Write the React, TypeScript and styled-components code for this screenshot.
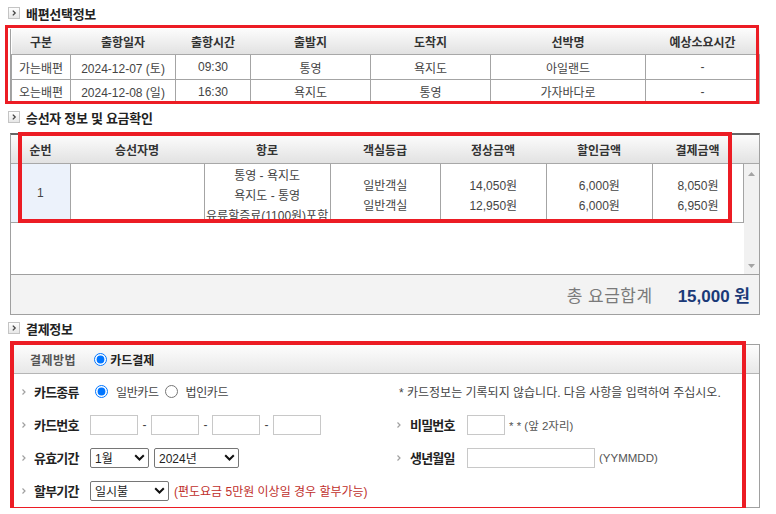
import styled, { createGlobalStyle } from 'styled-components'

const GlobalStyle = createGlobalStyle`
  html, body { margin: 0; padding: 0; background: #fff; }
  body {
    font-family: 'Liberation Sans', 'Noto Sans CJK KR', sans-serif;
    font-size: 12px;
    color: #333;
  }
`

const Page = styled.div`
  width: 750px;
  padding: 0 16px 0 10px;
`

const SectionTitle = styled.h2`
  display: flex;
  align-items: center;
  gap: 6px;
  height: 26px;
  margin: 0 0 3px -2px;
  font-size: 13px;
  font-weight: 700;
  color: #222;
  letter-spacing: -0.3px;
`

const Frame = styled.div`
  position: relative;
`

const Highlight = styled.div<{ $top: number; $left: number; $w: number; $h: number; $bw?: number }>`
  position: absolute;
  top: ${p => p.$top}px;
  left: ${p => p.$left}px;
  width: ${p => p.$w}px;
  height: ${p => p.$h}px;
  box-sizing: border-box;
  border: ${p => p.$bw ?? 3}px solid #ec1c24;
  pointer-events: none;
`

const Grid = styled.table<{ $w: number }>`
  width: ${p => p.$w}px;
  border-collapse: collapse;
  table-layout: fixed;
`

const Th = styled.th<{ $h?: number }>`
  height: ${p => p.$h ?? 26}px;
  padding: 0;
  font-size: 12px;
  font-weight: 700;
  color: #333;
  text-align: center;
  background: linear-gradient(#fcfcfc, #e2e2e2);
  border-bottom: 1px solid #a8a8a8;
`

const Td = styled.td<{ $h?: number; $bg?: string }>`
  height: ${p => p.$h ?? 25}px;
  padding: 0;
  text-align: center;
  color: #444;
  font-size: 12px;
  border: 1px solid #a4a4a4;
  background: ${p => p.$bg ?? '#fff'};
`

const Bordered = styled.div`
  border-left: 1px solid #a0a0a0;
  border-right: 1px solid #a0a0a0;
`

const TopRule = styled.div`
  border-top: 2px solid #666;
  border-left: 1px solid #a0a0a0;
  border-right: 1px solid #a0a0a0;
`

const BodyArea = styled.div`
  display: flex;
  height: 110px;
`

const DataArea = styled.div`
  width: 733px;
  height: 110px;
  overflow: hidden;
  background: #fff;
`

const Lines = styled.div<{ $pt?: number }>`
  height: 58px;
  overflow: hidden;
  box-sizing: border-box;
  padding-top: ${p => p.$pt ?? 2}px;
  line-height: 20px;
`

const Scrollbar = styled.div`
  flex: 1;
  display: flex;
  flex-direction: column;
  justify-content: space-between;
  align-items: center;
  padding: 8px 0 6px;
  background: #f1f1f1;
`

const TotalRow = styled.div`
  display: flex;
  justify-content: flex-end;
  align-items: center;
  gap: 25px;
  height: 39px;
  padding-right: 9px;
  background: #f3f3f3;
  border: 1px solid #a0a0a0;
  font-size: 17px;
`

const TotalLabel = styled.span`
  color: #7a7a7a;
  letter-spacing: 0.5px;
`

const TotalValue = styled.span`
  color: #1b3a78;
  font-weight: 700;
`

const PayFrame = styled.div`
  border: 1px solid #a0a0a0;
  height: 162px;
`

const PayHeader = styled.div`
  display: flex;
  align-items: center;
  height: 28px;
  padding-left: 19px;
  background: linear-gradient(#fdfdfd, #e8e8e8);
  border-bottom: 1px solid #b5b5b5;
`

const HeadLabel = styled.span`
  font-weight: 700;
  color: #555;
  letter-spacing: 0.5px;
  margin-right: 18px;
`

const HeadValue = styled.span`
  font-weight: 700;
  color: #222;
  margin-left: 3px;
`

const PayBody = styled.div`
  display: grid;
  grid-template-columns: 385px 1fr;
  grid-auto-rows: 33px;
  padding-top: 1px;
`

const Field = styled.div<{ $pl?: number }>`
  display: flex;
  align-items: center;
  padding-left: ${p => p.$pl ?? 0}px;
  color: #444;
`

const Arrow = styled.span<{ $w: number }>`
  width: ${p => p.$w}px;
  display: flex;
  align-items: center;
`

const Label = styled.span<{ $w: number }>`
  width: ${p => p.$w}px;
  font-size: 13px;
  font-weight: 700;
  color: #222;
  letter-spacing: -0.8px;
`

const Radio = styled.input`
  width: 13px;
  height: 13px;
  margin: 0;
`

const RadioText = styled.span<{ $ml?: number }>`
  margin: 0 0 0 ${p => p.$ml ?? 0}px;
  color: #444;
  letter-spacing: -0.4px;
`

const TextInput = styled.input<{ $w: number }>`
  width: ${p => p.$w}px;
  height: 20px;
  box-sizing: border-box;
  border: 1px solid #c8c8c8;
  padding: 0;
  margin: 0;
  outline: none;
`

const Dash = styled.span`
  margin: 0 4.5px;
  color: #444;
`

const Note = styled.span<{ $ml?: number }>`
  margin-left: ${p => p.$ml ?? 4}px;
  color: #555;
  font-size: 11.5px;
`

const Notice = styled.span`
  color: #444;
`

const SelectBox = styled.div<{ $w: number }>`
  width: ${p => p.$w}px;
  height: 20px;
  box-sizing: border-box;
  display: flex;
  align-items: center;
  justify-content: space-between;
  padding: 0 3px 0 4px;
  margin-right: 5px;
  border: 1px solid #767676;
  border-radius: 2px;
  color: #222;
  font-size: 12px;
  background: #fff;
`

const Warn = styled.span`
  color: #c0302c;
`

const TitleIcon = () => (
  <svg width="12" height="12" viewBox="0 0 12 12">
    <defs>
      <linearGradient id="ti" x1="0" y1="0" x2="0" y2="1">
        <stop offset="0" stopColor="#ffffff" />
        <stop offset="1" stopColor="#e6e6e6" />
      </linearGradient>
    </defs>
    <rect x="0.5" y="0.5" width="11" height="11" fill="url(#ti)" stroke="#c4c4c4" />
    <path d="M4.8 3.6 L7.2 6 L4.8 8.4" fill="none" stroke="#444" strokeWidth="1.3" />
  </svg>
)

const Chevron = () => (
  <svg width="6" height="8" viewBox="0 0 6 8">
    <path d="M1.5 1.5 L4 4 L1.5 6.5" fill="none" stroke="#a0a0a0" strokeWidth="1.2" />
  </svg>
)

const DownChevron = () => (
  <svg width="11" height="7" viewBox="0 0 11 7">
    <path d="M1.2 1.2 L5.5 5.5 L9.8 1.2" fill="none" stroke="#111" strokeWidth="2" />
  </svg>
)

const ScrollArrow = ({ up }: { up?: boolean }) => (
  <svg width="7" height="4" viewBox="0 0 7 4">
    <path d={up ? 'M0 4 L3.5 0 L7 4 Z' : 'M0 0 L3.5 4 L7 0 Z'} fill="#a3a3a3" />
  </svg>
)

const Select = ({ w, value }: { w: number; value: string }) => (
  <SelectBox $w={w}>
    <span>{value}</span>
    <DownChevron />
  </SelectBox>
)

const voyageCols = [60, 105, 75, 120, 120, 155, 115]
const voyageHead = ['구분', '출항일자', '출항시간', '출발지', '도착지', '선박명', '예상소요시간']
const voyages = [
  ['가는배편', '2024-12-07 (토)', '09:30', '통영', '욕지도', '아일랜드', '-'],
  ['오는배편', '2024-12-08 (일)', '16:30', '욕지도', '통영', '가자바다로', '-'],
]

const paxCols = [60, 134, 126, 110, 106, 106, 91]
const paxHead = ['순번', '승선자명', '항로', '객실등급', '정상금액', '할인금액', '결제금액']

export default function App() {
  return (
    <Page>
      <GlobalStyle />

      <SectionTitle>
        <TitleIcon />
        배편선택정보
      </SectionTitle>
      <Frame>
        <Bordered>
          <Grid $w={748}>
            <colgroup>
              {voyageCols.map((w, i) => (
                <col key={i} style={{ width: i === 0 ? w - 1 : i === 6 ? w - 1 : w }} />
              ))}
            </colgroup>
            <thead>
              <tr>
                {voyageHead.map(h => (
                  <Th key={h} $h={25}>
                    {h}
                  </Th>
                ))}
              </tr>
            </thead>
            <tbody>
              {voyages.map((row, r) => (
                <tr key={r}>
                  {row.map((c, i) => (
                    <Td key={i} $h={r === 0 ? 24 : 23}>
                      {c}
                    </Td>
                  ))}
                </tr>
              ))}
            </tbody>
          </Grid>
        </Bordered>
        <Highlight $top={-4} $left={-5} $w={754} $h={79} />
      </Frame>

      <SectionTitle>
        <TitleIcon />
        승선자 정보 및 요금확인
      </SectionTitle>
      <Frame>
        <TopRule>
          <Grid $w={748}>
            <colgroup>
              {paxCols.map((w, i) => (
                <col key={i} style={{ width: i === 0 ? w - 1 : w }} />
              ))}
              <col style={{ width: 16 }} />
            </colgroup>
            <thead>
              <tr>
                {paxHead.map(h => (
                  <Th key={h} $h={28}>
                    {h}
                  </Th>
                ))}
                <Th $h={28} />
              </tr>
            </thead>
          </Grid>
          <BodyArea>
            <DataArea>
              <Grid $w={733}>
                <colgroup>
                  {paxCols.map((w, i) => (
                    <col key={i} style={{ width: i === 0 ? w - 1 : w }} />
                  ))}
                </colgroup>
                <tbody>
                  <tr>
                    <Td $h={58} $bg="#ecf2fb" style={{ borderLeft: 'none', borderTop: 'none' }}>
                      1
                    </Td>
                    <Td style={{ borderTop: 'none' }} />
                    <Td style={{ borderTop: 'none', verticalAlign: 'top' }}>
                      <Lines>
                        통영 - 욕지도
                        <br />
                        욕지도 - 통영
                        <br />
                        유류할증료(1100원)포함
                      </Lines>
                    </Td>
                    {[
                      ['일반객실', '일반객실'],
                      ['14,050원', '12,950원'],
                      ['6,000원', '6,000원'],
                      ['8,050원', '6,950원'],
                    ].map((pair, i) => (
                      <Td key={i} style={{ borderTop: 'none', verticalAlign: 'top' }}>
                        <Lines $pt={12}>
                          {pair[0]}
                          <br />
                          {pair[1]}
                        </Lines>
                      </Td>
                    ))}
                  </tr>
                </tbody>
              </Grid>
            </DataArea>
            <Scrollbar>
              <ScrollArrow up />
              <ScrollArrow />
            </Scrollbar>
          </BodyArea>
        </TopRule>
        <TotalRow>
          <TotalLabel>총 요금합계</TotalLabel>
          <TotalValue>15,000 원</TotalValue>
        </TotalRow>
        <Highlight $top={-1} $left={8} $w={714} $h={91} $bw={4} />
      </Frame>

      <SectionTitle>
        <TitleIcon />
        결제정보
      </SectionTitle>
      <Frame>
        <PayFrame>
          <PayHeader>
            <HeadLabel>결제방법</HeadLabel>
            <Radio type="radio" checked readOnly />
            <HeadValue>카드결제</HeadValue>
          </PayHeader>
          <PayBody>
            <Field $pl={10}>
              <Arrow $w={13}>
                <Chevron />
              </Arrow>
              <Label $w={61}>카드종류</Label>
              <Radio type="radio" name="ct" checked readOnly />
              <RadioText $ml={8}>일반카드</RadioText>
              <Radio type="radio" name="ct2" readOnly style={{ marginLeft: 6 }} />
              <RadioText $ml={8}>법인카드</RadioText>
            </Field>
            <Field $pl={3}>
              <Notice>* 카드정보는 기록되지 않습니다. 다음 사항을 입력하여 주십시오.</Notice>
            </Field>

            <Field $pl={10}>
              <Arrow $w={13}>
                <Chevron />
              </Arrow>
              <Label $w={56}>카드번호</Label>
              <TextInput $w={48} />
              <Dash>-</Dash>
              <TextInput $w={48} />
              <Dash>-</Dash>
              <TextInput $w={48} />
              <Dash>-</Dash>
              <TextInput $w={48} />
            </Field>
            <Field>
              <Arrow $w={14}>
                <Chevron />
              </Arrow>
              <Label $w={57}>비밀번호</Label>
              <TextInput $w={38} />
              <Note>* * (앞 2자리)</Note>
            </Field>

            <Field $pl={10}>
              <Arrow $w={13}>
                <Chevron />
              </Arrow>
              <Label $w={56}>유효기간</Label>
              <Select w={59} value="1월" />
              <Select w={85} value="2024년" />
            </Field>
            <Field>
              <Arrow $w={14}>
                <Chevron />
              </Arrow>
              <Label $w={57}>생년월일</Label>
              <TextInput $w={128} />
              <Note>(YYMMDD)</Note>
            </Field>

            <Field $pl={10}>
              <Arrow $w={13}>
                <Chevron />
              </Arrow>
              <Label $w={56}>할부기간</Label>
              <Select w={79} value="일시불" />
              <Warn>(편도요금 5만원 이상일 경우 할부가능)</Warn>
            </Field>
            <Field />
          </PayBody>
        </PayFrame>
        <Highlight $top={-3} $left={0} $w={736} $h={170} $bw={4} />
      </Frame>
    </Page>
  )
}
